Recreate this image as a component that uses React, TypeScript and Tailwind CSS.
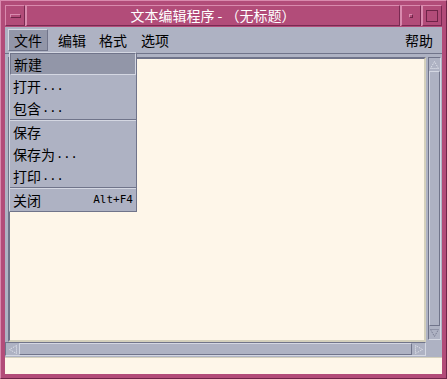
import React from "react";

const font = { fontFamily: '"Noto Sans CJK SC", "DejaVu Sans", sans-serif' };

function MenuItem({ label, dots, accel, active }: { label: string; dots?: boolean; accel?: string; active?: boolean }) {
  return (
    <div
      className={`h-[22px] flex items-center justify-between pl-[3px] pr-[3px] text-[14px] text-black ${
        active ? "bg-[#9296a8] border-t border-l border-[#70748a] border-b border-r border-b-[#d4d7e2] border-r-[#d4d7e2]" : ""
      }`}
    >
      <span className="flex items-center">
        {label}
        {dots && <span className="font-['DejaVu_Sans_Mono',monospace] text-[12px] tracking-[0px] ml-[1px]">...</span>}
      </span>
      {accel && <span className="text-[11px] font-['DejaVu_Sans_Mono',monospace]">{accel}</span>}
    </div>
  );
}

function Sep() {
  return <div className="border-t border-[#70748a] border-b border-b-[#d4d7e2]" />;
}

export default function App() {
  return (
    <div className="w-[447px] h-[379px] bg-[#b24c79] border border-[#6e2448] border-t-[#d98aae] border-l-[#d98aae] p-[4px] flex flex-col" style={font}>
      {/* Title bar */}
      <div className="h-[21px] flex gap-[1px] bg-[#d98aae]">
        <div className="w-[20px] bg-[#b24c79] flex items-center justify-center border border-[#d98aae] border-r-[#7a2a52] border-b-[#7a2a52]">
          <div className="w-[11px] h-[4px] border border-[#d98aae] border-r-[#6e2448] border-b-[#6e2448]" />
        </div>
        <div className="flex-1 bg-[#b24c79] flex items-center justify-center text-white text-[14px] border border-[#d98aae] border-r-[#7a2a52] border-b-[#7a2a52]">
          文本编辑程序 - （无标题）
        </div>
        <div className="w-[20px] bg-[#b24c79] flex items-center justify-center border border-[#d98aae] border-r-[#7a2a52] border-b-[#7a2a52]">
          <div className="w-[4px] h-[4px] border border-[#d98aae] border-r-[#6e2448] border-b-[#6e2448]" />
        </div>
        <div className="w-[20px] bg-[#b24c79] flex items-center justify-center border border-[#d98aae] border-r-[#7a2a52] border-b-[#7a2a52]">
          <div className="w-[12px] h-[12px] border border-[#d98aae] border-r-[#6e2448] border-b-[#6e2448] border-t-[#6e2448] border-l-[#6e2448]" />
        </div>
      </div>

      {/* Client */}
      <div className="flex-1 flex flex-col bg-[#aeb2c3] mt-[1px] relative">
        {/* Menu bar */}
        <div className="h-[27px] flex items-center px-[3px] text-[14px] text-black border-b border-[#70748a]">
          <div className="h-[22px] px-[5px] flex items-center bg-[#9296a8] border border-[#d4d7e2] border-r-[#70748a] border-b-[#70748a]">文件</div>
          <div className="ml-[6px] px-[4px]">编辑</div>
          <div className="ml-[5px] px-[4px]">格式</div>
          <div className="ml-[6px] px-[4px]">选项</div>
          <div className="flex-1" />
          <div className="px-[6px]">帮助</div>
        </div>

        {/* Main area */}
        <div className="flex-1 flex pt-[3px] pl-[3px] pr-[1px]">
          <div className="flex-1 bg-[#fef6e9] border-2 border-[#70748a] border-r-[#d4d0bc] border-b-[#d4d0bc]" />
          <div className="w-[13px] ml-[2px] mb-[2px] bg-[#a0a4b6] border border-[#70748a] border-r-[#d4d7e2] border-b-[#d4d7e2] flex flex-col">
            <div className="h-[13px] flex items-center justify-center bg-[#aeb2c3]">
              <svg width="9" height="8" viewBox="0 0 9 8">
                <path d="M4.5 0.5 L8.5 7.5 L0.5 7.5 Z" fill="none" stroke="#e6e8f0" strokeWidth="1" strokeDasharray="1 1" />
              </svg>
            </div>
            <div className="flex-1 bg-[#aeb2c3] border border-[#d4d7e2] border-r-[#70748a] border-b-[#70748a]" />
            <div className="h-[13px] flex items-center justify-center bg-[#aeb2c3]">
              <svg width="9" height="8" viewBox="0 0 9 8">
                <path d="M0.5 0.5 L8.5 0.5 L4.5 7.5 Z" fill="none" stroke="#70748a" strokeWidth="1" strokeDasharray="1 1" />
              </svg>
            </div>
          </div>
        </div>

        {/* Horizontal scrollbar */}
        <div className="h-[15px] flex pr-[16px] pb-[1px]">
          <div className="flex-1 flex bg-[#a0a4b6] border border-[#70748a] border-r-[#d4d7e2] border-b-[#d4d7e2]">
            <div className="w-[13px] flex items-center justify-center bg-[#aeb2c3]">
              <svg width="8" height="9" viewBox="0 0 8 9">
                <path d="M0.5 4.5 L7.5 0.5 L7.5 8.5 Z" fill="none" stroke="#e6e8f0" strokeWidth="1" strokeDasharray="1 1" />
              </svg>
            </div>
            <div className="flex-1 bg-[#aeb2c3] border border-[#d4d7e2] border-r-[#70748a] border-b-[#70748a]" />
            <div className="w-[13px] flex items-center justify-center bg-[#aeb2c3]">
              <svg width="8" height="9" viewBox="0 0 8 9">
                <path d="M0.5 0.5 L7.5 4.5 L0.5 8.5 Z" fill="none" stroke="#e6e8f0" strokeWidth="1" strokeDasharray="1 1" />
              </svg>
            </div>
          </div>
        </div>

        {/* Status field */}
        <div className="h-[17px] bg-[#fef6e9] border-t border-[#d4d0bc]" />

        {/* File menu dropdown */}
        <div className="absolute left-[4px] top-[25px] w-[128px] bg-[#aeb2c3] border border-[#d4d7e2] border-r-[#70748a] border-b-[#70748a]">
          <MenuItem label="新建" active />
          <MenuItem label="打开" dots />
          <MenuItem label="包含" dots />
          <Sep />
          <MenuItem label="保存" />
          <MenuItem label="保存为" dots />
          <MenuItem label="打印" dots />
          <Sep />
          <MenuItem label="关闭" accel="Alt+F4" />
        </div>
      </div>
    </div>
  );
}
